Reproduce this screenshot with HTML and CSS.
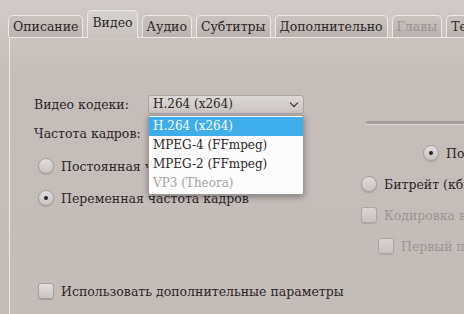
FILE: index.html
```html
<!DOCTYPE html>
<html lang="ru">
<head>
  <meta charset="UTF-8">
  <title>Видео</title>
  <link rel="stylesheet" href="styles.css">
</head>
<body>
  <div class="tabs">
    <div class="tab">Описание</div>
    <div class="tab active">Видео</div>
    <div class="tab">Аудио</div>
    <div class="tab">Субтитры</div>
    <div class="tab">Дополнительно</div>
    <div class="tab disabled">Главы</div>
    <div class="tab">Теги</div>
  </div>

  <div class="pane">
    <div class="columns">
      <div class="left">
        <div class="row codec-row">
          <span class="label">Видео кодеки:</span>
          <div class="combo-wrap">
            <div class="combo">H.264 (x264)<span class="arrow"></span></div>
            <div class="popup">
              <div class="item selected">H.264 (x264)</div>
              <div class="item">MPEG-4 (FFmpeg)</div>
              <div class="item">MPEG-2 (FFmpeg)</div>
              <div class="item off">VP3 (Theora)</div>
            </div>
          </div>
        </div>
        <div class="row rate-row">
          <span class="label">Частота кадров:</span>
          <div class="combo">Как у источника<span class="arrow"></span></div>
        </div>
        <label class="opt first-opt"><span class="radio"></span>Постоянная частота кадров</label>
        <label class="opt"><span class="radio on"></span>Переменная частота кадров</label>
      </div>

      <div class="right">
        <div class="slider"></div>
        <label class="opt quality"><span class="radio on"></span>Постоянное качество</label>
        <label class="opt"><span class="radio"></span>Битрейт (кбит/с):</label>
        <label class="opt off"><span class="check"></span>Кодировка в два прохода</label>
        <label class="opt off nested"><span class="check"></span>Первый проход турбо</label>
      </div>
    </div>

    <label class="opt extra"><span class="check"></span>Использовать дополнительные параметры</label>
  </div>
</body>
</html>
```

FILE: styles.css
```css
body {
  margin: 0;
  width: 464px;
  height: 314px;
  overflow: hidden;
  font-family: "DejaVu Serif", serif;
  font-size: 12.5px;
  color: #2b2627;
  background: linear-gradient(#d0cbc9, #c5bdba 70px, #c4bcb9);
}
.tabs {
  display: flex;
  align-items: flex-end;
  gap: 4px;
  padding: 10px 0 0 8px;
  white-space: nowrap;
}
.tab {
  height: 21px;
  line-height: 21px;
  padding: 0 4px;
  border: 1px solid #ece8e7;
  border-bottom: none;
  border-radius: 5px 5px 0 0;
  background: linear-gradient(#c9c3c0, #bab2af);
  flex-shrink: 0;
}
.tab.active {
  height: 27px;
  line-height: 24px;
  background: linear-gradient(#d6d2d0, #c8c1be);
  margin-bottom: -1px;
  position: relative;
}
.tab.disabled { color: #9b9391; }
.pane {
  margin-left: 9px;
  border-left: 1px solid #ece8e7;
  border-top: 1px solid #ece8e7;
  height: 300px;
  padding: 56px 0 0 24px;
}
.columns {
  display: flex;
}
.left {
  width: 327px;
  flex-shrink: 0;
}
.right {
  flex-shrink: 0;
  white-space: nowrap;
}
.row {
  display: flex;
  align-items: center;
  height: 20px;
}
.label { width: 114px; }
.rate-row { margin-top: 9px; }
.combo-wrap { position: relative; }
.combo {
  position: relative;
  width: 146px;
  height: 17px;
  line-height: 17px;
  padding-left: 4px;
  padding-right: 4px;
  border: 1px solid #a9a3a1;
  border-radius: 3px;
  background: linear-gradient(#dcd8d6, #cbc5c2);
  font-size: 12px;
}
.arrow {
  position: absolute;
  right: 6px;
  top: 4px;
  width: 5px;
  height: 5px;
  border-right: 1.6px solid #2b2627;
  border-bottom: 1.6px solid #2b2627;
  transform: rotate(45deg);
}
.popup {
  position: absolute;
  left: 0;
  top: 20px;
  width: 154px;
  padding: 1px 0;
  background: #fcfcfc;
  border: 1px solid #9e9896;
  border-radius: 2px;
  box-shadow: 0 2px 6px rgba(0, 0, 0, 0.35);
  font-size: 12px;
  z-index: 2;
}
.item {
  height: 19px;
  line-height: 19px;
  padding-left: 4px;
}
.item.selected {
  background: #3daee9;
  color: #fff;
}
.item.off { color: #a8a2a0; }
.opt {
  display: flex;
  align-items: center;
  gap: 7px;
  height: 16px;
  white-space: nowrap;
}
.left .first-opt { margin: 15px 0 0 4px; }
.left .opt + .opt { margin: 16px 0 0 4px; }
.radio, .check {
  width: 14px;
  height: 14px;
  flex-shrink: 0;
  border: 1px solid #a59f9d;
  background: linear-gradient(#e2dedd, #c9c3c1);
  box-shadow: 0 1px 1px rgba(0, 0, 0, 0.15);
}
.radio { border-radius: 50%; position: relative; }
.check { border-radius: 3px; }
.radio.on::after {
  content: "";
  position: absolute;
  left: 5px;
  top: 5px;
  width: 4px;
  height: 4px;
  border-radius: 50%;
  background: #232627;
}
.opt.off { color: #9d9593; }
.opt.off .check { opacity: 0.75; }
.slider {
  margin: 27px 0 0 5px;
  width: 120px;
  height: 3px;
  border-radius: 2px;
  background: #a39d9b;
  box-shadow: 0 1px 0 #dcd8d6;
}
.right .quality { margin: 21px 0 0 62px; }
.right .opt + .opt { margin-top: 15px; }
.right .nested { margin-left: 17px; }
.extra { margin: 29px 0 0 4px; }
```
